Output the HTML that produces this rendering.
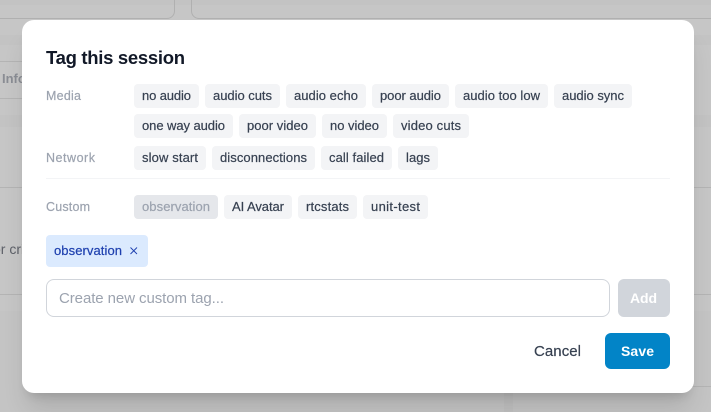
<!DOCTYPE html>
<html><head><meta charset="utf-8"><style>
html,body{margin:0;padding:0;width:711px;height:412px;overflow:hidden;background:#c6c6c6}
body{position:relative;font-family:"Liberation Sans",sans-serif}
.a{position:absolute}
.l{position:absolute;height:1px;background:#b4b4b4}
.m{position:absolute;left:22px;top:20px;width:672px;height:373px;background:#fff;border-radius:12px;box-shadow:0 20px 25px -5px rgba(0,0,0,.12),0 8px 10px -6px rgba(0,0,0,.14)}
svg{position:absolute;left:0;top:0}
text{font-family:"Liberation Sans",sans-serif;font-size:13px}
.w text{stroke:currentColor;stroke-width:.2px}
</style></head><body>
<div class="a" style="left:0;top:0;width:711px;height:5px;background:#c3c3c3"></div>
<div class="a" style="left:-20px;top:-20px;width:193px;height:37px;border:1px solid #b0b0b0;border-radius:8px"></div>
<div class="a" style="left:191px;top:-20px;width:540px;height:37px;border:1px solid #b0b0b0;border-radius:8px"></div>
<div class="a" style="left:0;top:35px;width:711px;height:10px;background:#c3c3c3"></div>
<div class="l" style="left:0;top:61px;width:30px"></div>
<div class="l" style="left:0;top:98px;width:30px"></div>
<div class="a" style="left:0;top:115px;width:711px;height:12px;background:#c3c3c3"></div>
<div class="l" style="left:0;top:187px;width:711px"></div>
<div class="l" style="left:0;top:294px;width:711px"></div>
<div class="a" style="left:0;top:311px;width:711px;height:101px;background:#c4c4c4"></div>
<div class="l" style="left:680px;top:386px;width:31px"></div>
<div class="a" style="left:504px;top:393px;width:9px;height:19px;background:#c0c0c0"></div>
<div class="a" style="left:2px;top:71px;font-size:13px;font-weight:bold;color:#8a8d94">Info</div>
<div class="a" style="left:-7px;top:241px;font-size:14px;color:#5d6068">or cri</div>
<div class="m"></div>
<svg width="711" height="412" viewBox="0 0 711 412">
<text x="46" y="64" textLength="139" lengthAdjust="spacing" style="font-size:18.5px;font-weight:bold" fill="#111827">Tag this session</text>
<g fill="#9ca3af" color="#9ca3af" class="w">
<text x="46" y="100" textLength="35" lengthAdjust="spacing" style="font-size:12.5px">Media</text>
<text x="46" y="162" textLength="49" lengthAdjust="spacing" style="font-size:12.5px">Network</text>
<text x="46" y="211" textLength="44" lengthAdjust="spacing" style="font-size:12.5px">Custom</text>
</g>
<g fill="#f3f4f6">
<rect x="134" y="84" width="65" height="24" rx="4"/><rect x="205" y="84" width="75" height="24" rx="4"/><rect x="286" y="84" width="80" height="24" rx="4"/><rect x="372" y="84" width="77" height="24" rx="4"/><rect x="455" y="84" width="93" height="24" rx="4"/><rect x="554" y="84" width="78" height="24" rx="4"/>
<rect x="134" y="114" width="99" height="24" rx="4"/><rect x="239" y="114" width="77" height="24" rx="4"/><rect x="322" y="114" width="65" height="24" rx="4"/><rect x="393" y="114" width="76" height="24" rx="4"/>
<rect x="134" y="146" width="72" height="24" rx="4"/><rect x="212" y="146" width="103" height="24" rx="4"/><rect x="321" y="146" width="71" height="24" rx="4"/><rect x="398" y="146" width="40" height="24" rx="4"/>
<rect x="224" y="195" width="68" height="24" rx="4"/><rect x="298" y="195" width="59" height="24" rx="4"/><rect x="363" y="195" width="65" height="24" rx="4"/>
</g>
<rect x="134" y="195" width="84" height="24" rx="4" fill="#e5e7eb"/>
<rect x="46" y="178" width="624" height="1" fill="#f3f4f6"/>
<g fill="#374151" color="#374151" class="w">
<text x="142" y="100" textLength="49" lengthAdjust="spacing">no audio</text>
<text x="213" y="100" textLength="59" lengthAdjust="spacing">audio cuts</text>
<text x="294" y="100" textLength="64" lengthAdjust="spacing">audio echo</text>
<text x="380" y="100" textLength="61" lengthAdjust="spacing">poor audio</text>
<text x="463" y="100" textLength="77" lengthAdjust="spacing">audio too low</text>
<text x="562" y="100" textLength="62" lengthAdjust="spacing">audio sync</text>
<text x="142" y="130" textLength="83" lengthAdjust="spacing">one way audio</text>
<text x="247" y="130" textLength="61" lengthAdjust="spacing">poor video</text>
<text x="330" y="130" textLength="49" lengthAdjust="spacing">no video</text>
<text x="401" y="130" textLength="60" lengthAdjust="spacing">video cuts</text>
<text x="142" y="162" textLength="56" lengthAdjust="spacing">slow start</text>
<text x="220" y="162" textLength="87" lengthAdjust="spacing">disconnections</text>
<text x="329" y="162" textLength="55" lengthAdjust="spacing">call failed</text>
<text x="406" y="162" textLength="24" lengthAdjust="spacing">lags</text>
<text x="232" y="211" textLength="52" lengthAdjust="spacing">AI Avatar</text>
<text x="306" y="211" textLength="43" lengthAdjust="spacing">rtcstats</text>
<text x="371" y="211" textLength="49" lengthAdjust="spacing">unit-test</text>
</g>
<g class="w" color="#9ca3af"><text x="142" y="211" textLength="68" lengthAdjust="spacing" fill="#9ca3af">observation</text></g>
<rect x="46" y="235" width="102" height="32" rx="4" fill="#dbeafe"/>
<g class="w" color="#1e40af"><text x="54" y="255" textLength="68" lengthAdjust="spacing" fill="#1e40af">observation</text></g>
<path d="M130.5 247.5l6.5 6.5M137 247.5l-6.5 6.5" stroke="#1e40af" stroke-width=".9" fill="none"/>
<rect x="46.5" y="279.5" width="563" height="37" rx="7.5" fill="#fff" stroke="#d1d5db"/>
<text x="59" y="303" textLength="165" lengthAdjust="spacing" style="font-size:15px" fill="#9ca3af">Create new custom tag...</text>
<rect x="618" y="279" width="52" height="38" rx="6" fill="#d1d5db"/>
<text x="630" y="303" textLength="27" lengthAdjust="spacing" style="font-size:14px;font-weight:bold" fill="#fff">Add</text>
<g class="w" color="#374151"><text x="534" y="356" textLength="47" lengthAdjust="spacing" style="font-size:15px" fill="#374151">Cancel</text></g>
<rect x="605" y="333" width="65" height="36" rx="6" fill="#0284c7"/>
<text x="621" y="356" textLength="33" lengthAdjust="spacing" style="font-size:14px;font-weight:bold" fill="#fff">Save</text>
</svg>
</body></html>
